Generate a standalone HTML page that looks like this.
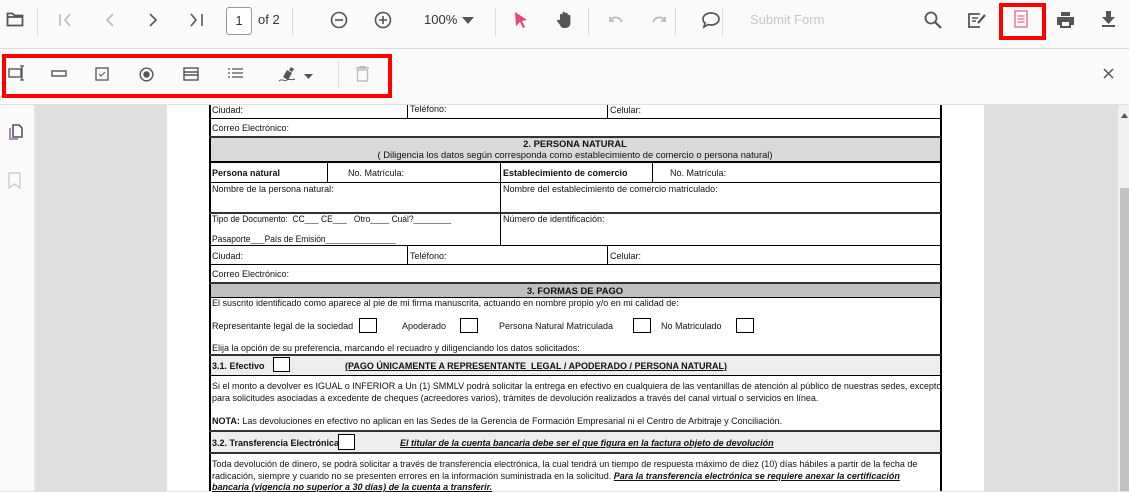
<!DOCTYPE html>
<html><head><meta charset="utf-8"><style>
*{margin:0;padding:0;box-sizing:border-box}
body{width:1129px;height:491px;overflow:hidden;background:#e0e0e0;font-family:"Liberation Sans",Arial,sans-serif;position:relative}
.a{position:absolute}
.tb{left:0;top:0;width:1129px;height:49px;background:#fafafa;border-bottom:1px solid #dcdcdc}
.tb2{left:0;top:49px;width:1129px;height:56px;background:#fafafa;border-bottom:1px solid #e0e0e0}
.sep{position:absolute;width:1px;background:#ddd}
.side{left:0;top:105px;width:35px;height:386px;background:#fafafa;border-right:1px solid #e6e6e6}
.page{left:167px;top:105px;width:817px;height:386px;background:#fff}
.h{position:absolute;height:1px;background:#000}
.v{position:absolute;width:1px;background:#000}
.t{position:absolute;font-size:9.4px;color:#111;white-space:nowrap;transform:scaleX(.96);transform-origin:0 0;line-height:11px}
.c{position:absolute;left:209px;width:732px;text-align:center;font-size:9.4px;color:#111;white-space:nowrap;line-height:11px}
.b{font-weight:bold}
.cb{position:absolute;border:1px solid #000;background:#fff}
svg{position:absolute}
</style></head><body>
<div class="a tb"></div>
<div class="a tb2"></div>
<div class="a side"></div>
<div class="a page"></div>
<div class="a" style="left:1118px;top:105px;width:11px;height:386px;background:#f0f0f0"></div>
<div class="a" style="left:1120px;top:188px;width:9px;height:303px;background:#c2c2c2"></div>
<svg style="left:1121px;top:113px" width="7" height="5"><path d="M0 5L3.5 0L7 5Z" fill="#555"/></svg>

<svg style="left:6px;top:11px" width="18" height="16" viewBox="0 0 18 16"><path d="M1.5 2.5h5l2 2h8v10h-15z M1.5 6h15" fill="none" stroke="#555" stroke-width="1.8"/></svg>
<div class="sep" style="left:37px;top:8px;height:28px"></div>
<svg style="left:58px;top:13px" width="16" height="14"><path d="M2 1v12M12 1L7 7l5 6" fill="none" stroke="#bbb" stroke-width="1.6"/></svg>
<svg style="left:104px;top:13px" width="12" height="14"><path d="M9 1L3 7l6 6" fill="none" stroke="#bbb" stroke-width="1.6"/></svg>
<svg style="left:147px;top:13px" width="12" height="14"><path d="M3 1l6 6-6 6" fill="none" stroke="#555" stroke-width="1.6"/></svg>
<svg style="left:189px;top:13px" width="16" height="14"><path d="M2 1l5 6-5 6M13 1v12" fill="none" stroke="#555" stroke-width="1.6"/></svg>
<div class="a" style="left:226px;top:7px;width:26px;height:28px;border:1px solid #999;border-radius:3px;background:#fff;font-size:13px;color:#333;text-align:center;line-height:26px">1</div>
<div class="a" style="left:258px;top:12px;font-size:13px;color:#333">of 2</div>
<div class="sep" style="left:292px;top:8px;height:28px"></div>
<svg style="left:330px;top:11px" width="18" height="18"><circle cx="9" cy="9" r="7.5" fill="none" stroke="#555" stroke-width="1.6"/><path d="M5 9h8" stroke="#555" stroke-width="1.6"/></svg>
<svg style="left:374px;top:11px" width="18" height="18"><circle cx="9" cy="9" r="7.5" fill="none" stroke="#555" stroke-width="1.6"/><path d="M5 9h8M9 5v8" stroke="#555" stroke-width="1.6"/></svg>
<div class="a" style="left:424px;top:12px;font-size:13px;color:#333">100%</div>
<svg style="left:462px;top:17px" width="12" height="7"><path d="M0 0h12L6 7z" fill="#555"/></svg>
<div class="sep" style="left:495px;top:8px;height:28px"></div>
<svg style="left:514px;top:11px" width="14" height="18"><path d="M1 1l12 8-5 1 3 6-2 1-3-6-4 4z" fill="#e5477a"/></svg>
<svg style="left:556px;top:10px" width="18" height="19"><path d="M4 10V5a1.3 1.3 0 0 1 2.6 0V3a1.3 1.3 0 0 1 2.6 0v1a1.3 1.3 0 0 1 2.6 0v2a1.3 1.3 0 0 1 2.6 0v7c0 3-2 5-5 5H8c-2 0-3-1-4-3L1 11c0-1 1-2 2-1z" fill="#555"/></svg>
<div class="sep" style="left:588px;top:8px;height:28px"></div>
<svg style="left:607px;top:14px" width="17" height="11"><path d="M3 3v4h4M3 7c3-5 9-5 12 1" fill="none" stroke="#bbb" stroke-width="1.8"/></svg>
<svg style="left:651px;top:14px" width="17" height="11"><path d="M14 3v4h-4M14 7c-3-5-9-5-12 1" fill="none" stroke="#bbb" stroke-width="1.8"/></svg>
<div class="sep" style="left:675px;top:8px;height:28px"></div>
<svg style="left:701px;top:11px" width="20" height="18"><path d="M10 2c4.5 0 8 2.5 8 6s-3.5 6-8 6c-1 0-2 0-3-.4L3 16l1-4C2.5 11 2 9.5 2 8c0-3.5 3.5-6 8-6z" fill="none" stroke="#555" stroke-width="1.7"/></svg>
<div class="sep" style="left:722px;top:8px;height:28px"></div>
<div class="a" style="left:750px;top:12px;font-size:13px;color:#c8c8c8">Submit Form</div>
<svg style="left:924px;top:11px" width="18" height="18"><circle cx="7" cy="7" r="5.5" fill="none" stroke="#555" stroke-width="1.8"/><path d="M11 11l6 6" stroke="#555" stroke-width="2.2"/></svg>
<svg style="left:967px;top:11px" width="20" height="18"><path d="M13 3H2v13h11" fill="none" stroke="#555" stroke-width="1.8"/><path d="M5 7h6M5 10h4" stroke="#555" stroke-width="1.6"/><path d="M11 12l7-8" stroke="#555" stroke-width="2.2"/></svg>
<div class="a" style="left:999px;top:3px;width:47px;height:37px;border:4px solid #f00"></div>
<svg style="left:1014px;top:10px" width="14" height="18"><rect x="1" y="1" width="12" height="16" fill="none" stroke="#e5708f" stroke-width="1.4"/><path d="M3.5 6h7M3.5 9h7M3.5 12h7" stroke="#e5708f" stroke-width="1.2"/></svg>
<svg style="left:1056px;top:12px" width="19" height="16"><path d="M5 0h9v4H5z" fill="#555"/><path d="M1 5h17v8h-3v3H4v-3H1z" fill="#555"/><rect x="6" y="10" width="7" height="4" fill="#fafafa"/></svg>
<svg style="left:1101px;top:11px" width="15" height="17"><path d="M5 0h5v6h4L7.5 13 1 6h4z" fill="#555"/><path d="M1 15h13" stroke="#555" stroke-width="2"/></svg>

<div class="a" style="left:2px;top:54px;width:390px;height:44px;border:4px solid #f00"></div>
<svg style="left:8px;top:65px" width="17" height="16"><rect x="1" y="4" width="12" height="8" fill="none" stroke="#555" stroke-width="1.4"/><path d="M14 1v14M12 1h4M12 15h4" stroke="#555" stroke-width="1.3"/></svg>
<svg style="left:51px;top:70px" width="16" height="7"><rect x="1" y="1" width="14" height="5" fill="none" stroke="#555" stroke-width="1.4"/></svg>
<svg style="left:95px;top:67px" width="14" height="14"><rect x="1" y="1" width="12" height="12" fill="none" stroke="#555" stroke-width="1.3"/><path d="M4 7l2 2 4-4" fill="none" stroke="#555" stroke-width="1"/></svg>
<svg style="left:139px;top:67px" width="15" height="15"><circle cx="7.5" cy="7.5" r="6.3" fill="none" stroke="#555" stroke-width="1.4"/><circle cx="7.5" cy="7.5" r="3.2" fill="#555"/></svg>
<svg style="left:183px;top:67px" width="16" height="14"><rect x="1" y="1" width="14" height="12" fill="none" stroke="#555" stroke-width="1.4"/><path d="M1 5h14M1 8h14" stroke="#555" stroke-width="1.6"/></svg>
<svg style="left:228px;top:68px" width="15" height="11"><path d="M0 1h2M4 1h11M0 5h2M4 5h11M0 9h2M4 9h11" stroke="#555" stroke-width="1.3"/></svg>
<svg style="left:278px;top:66px" width="18" height="17"><path d="M5 11l4-7 5 3-4 7z M11 4l2-3 3 2-2 3" fill="#555"/><path d="M1 15c3-3 5 1 8-1s4 1 8-1" fill="none" stroke="#555" stroke-width="1"/></svg>
<svg style="left:304px;top:74px" width="9" height="5"><path d="M0 0h9L4.5 5z" fill="#555"/></svg>
<div class="sep" style="left:338px;top:62px;height:27px"></div>
<svg style="left:356px;top:66px" width="13" height="16"><path d="M0 2h13M4 2V0.5h5V2" stroke="#bbb" stroke-width="1.4" fill="none"/><rect x="1.5" y="4" width="10" height="11" fill="none" stroke="#bbb" stroke-width="1.4"/></svg>
<svg style="left:1103px;top:68px" width="11" height="11"><path d="M1 1l9 9M10 1l-9 9" stroke="#555" stroke-width="1.5"/></svg>

<svg style="left:8px;top:124px" width="15" height="17"><path d="M5 1h6l3 3v9H5z" fill="none" stroke="#555" stroke-width="1.6"/><path d="M2 4v11h8" fill="none" stroke="#8a6fb0" stroke-width="1.6"/></svg>
<svg style="left:8px;top:172px" width="13" height="17"><path d="M1 1h11v15l-5.5-4L1 16z" fill="none" stroke="#ccc" stroke-width="1.4"/></svg>

<div class="a" style="left:209px;top:136px;width:732px;height:26px;background:#d9d9d9"></div>
<div class="a" style="left:209px;top:282px;width:732px;height:15px;background:#bfbfbf"></div>
<div class="a" style="left:209px;top:355px;width:732px;height:20px;background:#ededed"></div>
<div class="a" style="left:209px;top:431px;width:732px;height:21px;background:#ededed"></div>

<div class="v" style="left:209px;top:105px;height:386px;width:2px"></div>
<div class="v" style="left:940px;top:105px;height:386px;width:2px"></div>
<div class="h" style="left:209px;top:118px;width:732px"></div>
<div class="h" style="left:209px;top:136px;width:732px;height:2px;background:#333"></div>
<div class="h" style="left:209px;top:161px;width:732px;height:2px"></div>
<div class="h" style="left:209px;top:182px;width:732px"></div>
<div class="h" style="left:209px;top:212px;width:732px;height:2px;background:#333"></div>
<div class="h" style="left:209px;top:245px;width:732px"></div>
<div class="h" style="left:209px;top:264px;width:732px"></div>
<div class="h" style="left:209px;top:282px;width:732px;height:2px;background:#333"></div>
<div class="h" style="left:209px;top:297px;width:732px"></div>
<div class="h" style="left:209px;top:354px;width:732px;height:2px;background:#333"></div>
<div class="h" style="left:209px;top:375px;width:732px"></div>
<div class="h" style="left:209px;top:430px;width:732px;height:2px;background:#333"></div>
<div class="h" style="left:209px;top:452px;width:732px;height:2px;background:#333"></div>
<div class="v" style="left:407px;top:105px;height:13px"></div>
<div class="v" style="left:607px;top:105px;height:13px"></div>
<div class="v" style="left:327px;top:162px;height:20px"></div>
<div class="v" style="left:500px;top:162px;height:83px"></div>
<div class="v" style="left:652px;top:162px;height:20px"></div>
<div class="v" style="left:407px;top:245px;height:19px"></div>
<div class="v" style="left:607px;top:245px;height:19px"></div>

<div class="t" style="left:212px;top:104px">Ciudad:</div>
<div class="t" style="left:410px;top:103px">Teléfono:</div>
<div class="t" style="left:610px;top:104px">Celular:</div>
<div class="t" style="left:212px;top:122px">Correo Electrónico:</div>
<div class="c b" style="top:138px">2. PERSONA NATURAL</div>
<div class="c" style="top:149px">( Diligencia los datos según corresponda como establecimiento de comercio o persona natural)</div>
<div class="t b" style="left:212px;top:167px">Persona natural</div>
<div class="t" style="left:348px;top:167px">No. Matrícula:</div>
<div class="t b" style="left:503px;top:167px">Establecimiento de comercio</div>
<div class="t" style="left:670px;top:167px">No. Matrícula:</div>
<div class="t" style="left:212px;top:183px">Nombre de la persona natural:</div>
<div class="t" style="left:503px;top:183px">Nombre del establecimiento de comercio matriculado:</div>
<div class="t" style="left:212px;top:214px;font-size:8.8px">Tipo de Documento:&nbsp; CC___ CE___&nbsp;&nbsp; Otro____ Cuál?________</div>
<div class="t" style="left:503px;top:213px">Número de identificación:</div>
<div class="t" style="left:212px;top:234px;font-size:8.8px">Pasaporte___País de Emisión_______________</div>
<div class="t" style="left:212px;top:250px">Ciudad:</div>
<div class="t" style="left:410px;top:250px">Teléfono:</div>
<div class="t" style="left:610px;top:250px">Celular:</div>
<div class="t" style="left:212px;top:268px">Correo Electrónico:</div>
<div class="c b" style="top:285px">3. FORMAS DE PAGO</div>
<div class="t" style="left:212px;top:297px">El suscrito identificado como aparece al pie de mi firma manuscrita, actuando en nombre propio y/o en mi calidad de:</div>
<div class="t" style="left:212px;top:320px">Representante legal de la sociedad</div>
<div class="t" style="left:402px;top:320px">Apoderado</div>
<div class="t" style="left:499px;top:320px">Persona Natural Matriculada</div>
<div class="t" style="left:661px;top:320px">No Matriculado</div>
<div class="cb" style="left:359px;top:318px;width:18px;height:15px"></div>
<div class="cb" style="left:460px;top:318px;width:18px;height:15px"></div>
<div class="cb" style="left:633px;top:318px;width:18px;height:15px"></div>
<div class="cb" style="left:736px;top:318px;width:18px;height:15px"></div>
<div class="t" style="left:212px;top:342px">Elija la opción de su preferencia, marcando el recuadro y diligenciando los datos solicitados:</div>
<div class="t b" style="left:212px;top:360px">3.1. Efectivo</div>
<div class="cb" style="left:273px;top:357px;width:17px;height:15px"></div>
<div class="t b" style="left:345px;top:360px;text-decoration:underline">(PAGO ÚNICAMENTE A REPRESENTANTE&nbsp; LEGAL / APODERADO / PERSONA NATURAL)</div>
<div class="t" style="left:212px;top:380px">Si el monto a devolver es IGUAL o INFERIOR a Un (1) SMMLV podrá solicitar la entrega en efectivo en cualquiera de las ventanillas de atención al público de nuestras sedes, excepto</div>
<div class="t" style="left:212px;top:392px">para solicitudes asociadas a excedente de cheques (acreedores varios), trámites de devolución realizados a través del canal virtual o servicios en línea.</div>
<div class="t" style="left:212px;top:415px"><b>NOTA:</b> Las devoluciones en efectivo no aplican en las Sedes de la Gerencia de Formación Empresarial ni el Centro de Arbitraje y Conciliación.</div>
<div class="t b" style="left:212px;top:437px">3.2. Transferencia Electrónica</div>
<div class="cb" style="left:338px;top:434px;width:17px;height:16px"></div>
<div class="t b" style="left:400px;top:437px;font-style:italic;text-decoration:underline">El titular de la cuenta bancaria debe ser el que figura en la factura objeto de devolución</div>
<div class="t" style="left:212px;top:458px">Toda devolución de dinero, se podrá solicitar a través de transferencia electrónica, la cual tendrá un tiempo de respuesta máximo de diez (10) días hábiles a partir de la fecha de</div>
<div class="t" style="left:212px;top:470px">radicación, siempre y cuando no se presenten errores en la información suministrada en la solicitud. <b><i><u>Para la transferencia electrónica se requiere anexar la certificación</u></i></b></div>
<div class="t b" style="left:212px;top:481px;font-style:italic;text-decoration:underline">bancaria (vigencia no superior a 30 días) de la cuenta a transferir.</div>
</body></html>
